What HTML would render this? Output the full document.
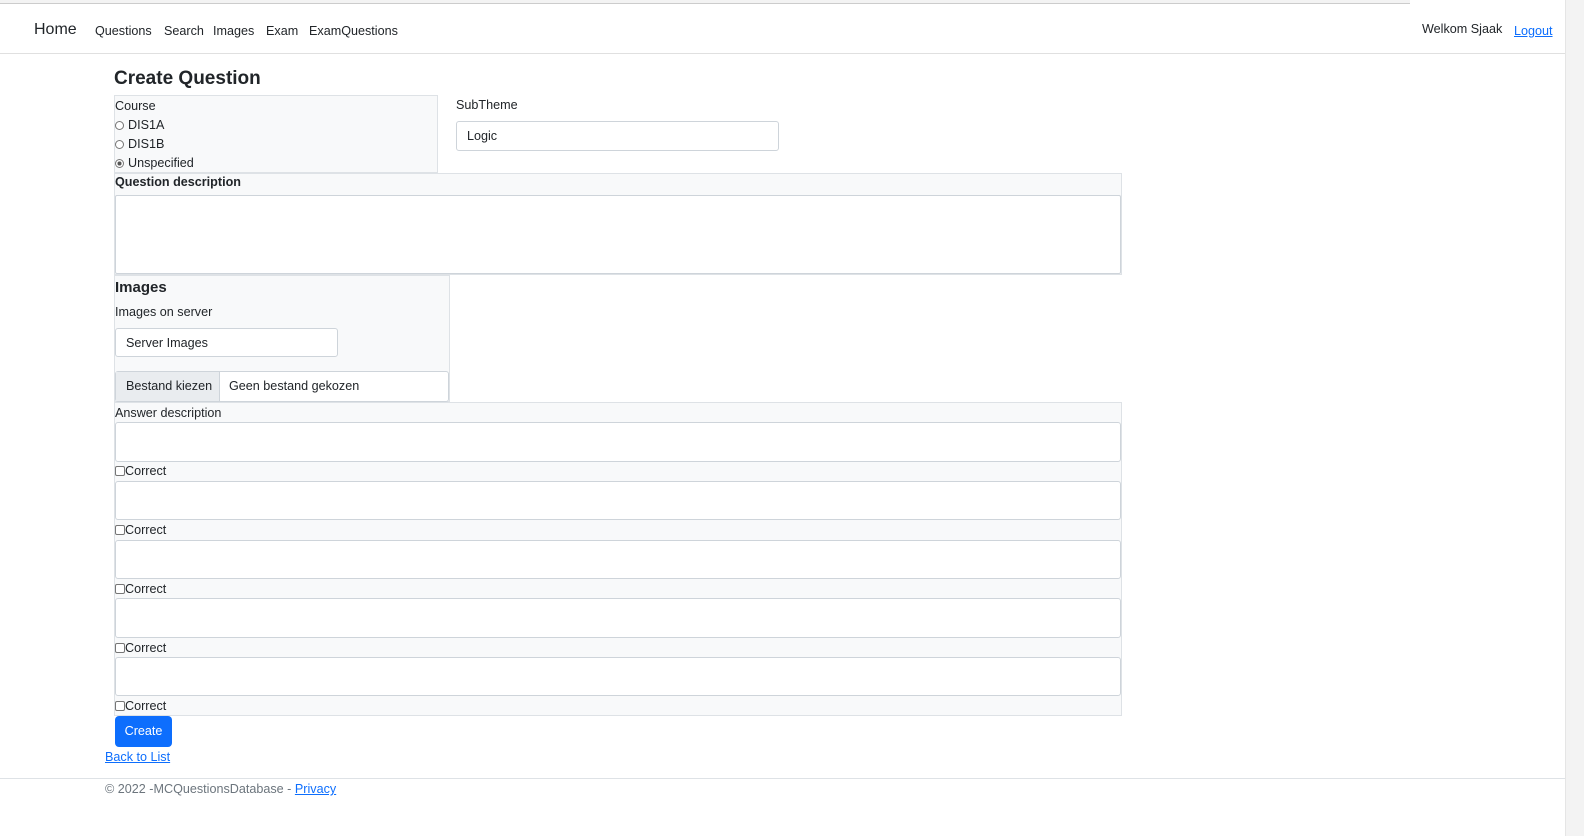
<!DOCTYPE html>
<html style="overflow:hidden"><head><meta charset="utf-8"><style>
*{box-sizing:border-box;margin:0;padding:0}
html,body{overflow:hidden}
body{width:1584px;height:836px;background:#fff;font-family:"Liberation Sans",sans-serif;color:#212529;position:relative;font-size:12.6px}
.a{position:absolute;white-space:nowrap}
.box{position:absolute;background:#f8f9fa;border:1px solid #dee2e6}
.inp{position:absolute;background:#fff;border:1px solid #ced4da;border-radius:3px}
a{color:#0d6efd;text-decoration:underline}
.rad{display:inline-block;width:9px;height:9px;border:1px solid #767676;border-radius:50%;margin-right:4px;vertical-align:-1px;background:#fff}
.chk{display:inline-block;width:10px;height:10px;border:1px solid #767676;border-radius:2px;vertical-align:-1px;background:#fff}
</style></head><body>
<div class="a" style="left:0;top:0;width:1410px;height:4px;border-bottom:1px solid #ccc;background:#f3f3f3"></div>
<div class="a" style="left:1565px;top:0;width:19px;height:836px;background:#f3f3f3;border-left:1px solid #e5e5e5"></div>
<div class="a" style="left:0;top:53px;width:1565px;height:1px;background:#e0e0e0"></div>
<div class="a" style="left:34px;top:21px;font-size:16px">Home</div>
<div class="a" style="left:95px;top:24px">Questions</div>
<div class="a" style="left:164px;top:24px">Search</div>
<div class="a" style="left:213px;top:24px">Images</div>
<div class="a" style="left:266px;top:24px">Exam</div>
<div class="a" style="left:309px;top:24px">ExamQuestions</div>
<div class="a" style="left:1422px;top:22px">Welkom Sjaak</div>
<div class="a" style="left:1514px;top:24px"><a>Logout</a></div>

<div class="a" style="left:114px;top:68px;font-size:19px;font-weight:bold">Create Question</div>

<div class="box" style="left:114px;top:95px;width:324px;height:78px"></div>
<div class="a" style="left:115px;top:99px">Course</div>
<div class="a" style="left:115px;top:118px"><span class="rad"></span>DIS1A</div>
<div class="a" style="left:115px;top:137px"><span class="rad"></span>DIS1B</div>
<div class="a" style="left:115px;top:156px"><span class="rad" style="background:radial-gradient(#555 40%,#fff 45%)"></span>Unspecified</div>

<div class="a" style="left:456px;top:98px">SubTheme</div>
<div class="inp" style="left:456px;top:121px;width:323px;height:30px"></div>
<div class="a" style="left:467px;top:129px">Logic</div>

<div class="box" style="left:114px;top:173px;width:1008px;height:102px"></div>
<div class="a" style="left:115px;top:175px;font-weight:bold">Question description</div>
<div class="inp" style="left:115px;top:195px;width:1006px;height:79px;border-radius:2px"></div>

<div class="box" style="left:114px;top:275px;width:336px;height:127px"></div>
<div class="a" style="left:115px;top:279px;font-size:15px;font-weight:bold">Images</div>
<div class="a" style="left:115px;top:305px">Images on server</div>
<div class="inp" style="left:115px;top:328px;width:223px;height:29px"></div>
<div class="a" style="left:126px;top:336px">Server Images</div>
<div class="inp" style="left:115px;top:371px;width:334px;height:31px"></div>
<div class="a" style="left:116px;top:372px;width:104px;height:29px;background:#e9ecef;border-right:1px solid #ced4da"></div>
<div class="a" style="left:126px;top:379px">Bestand kiezen</div>
<div class="a" style="left:229px;top:379px">Geen bestand gekozen</div>

<div class="box" style="left:114px;top:402px;width:1008px;height:314px"></div>
<div class="a" style="left:115px;top:406px">Answer description</div>
<div class="inp" style="left:115px;top:422px;width:1006px;height:40px"></div>
<div class="a" style="left:115px;top:464px"><span class="chk"></span>Correct</div>
<div class="inp" style="left:115px;top:481px;width:1006px;height:39px"></div>
<div class="a" style="left:115px;top:523px"><span class="chk"></span>Correct</div>
<div class="inp" style="left:115px;top:540px;width:1006px;height:39px"></div>
<div class="a" style="left:115px;top:582px"><span class="chk"></span>Correct</div>
<div class="inp" style="left:115px;top:598px;width:1006px;height:40px"></div>
<div class="a" style="left:115px;top:641px"><span class="chk"></span>Correct</div>
<div class="inp" style="left:115px;top:657px;width:1006px;height:39px"></div>
<div class="a" style="left:115px;top:699px"><span class="chk"></span>Correct</div>

<div class="a" style="left:115px;top:716px;width:57px;height:31px;background:#0d6efd;border-radius:4px;color:#fff;text-align:center;line-height:31px">Create</div>
<div class="a" style="left:105px;top:750px"><a>Back to List</a></div>

<div class="a" style="left:0;top:778px;width:1565px;height:1px;background:#dee2e6"></div>
<div class="a" style="left:105px;top:782px;color:#6c757d">© 2022 -MCQuestionsDatabase - <a>Privacy</a></div>
</body></html>
